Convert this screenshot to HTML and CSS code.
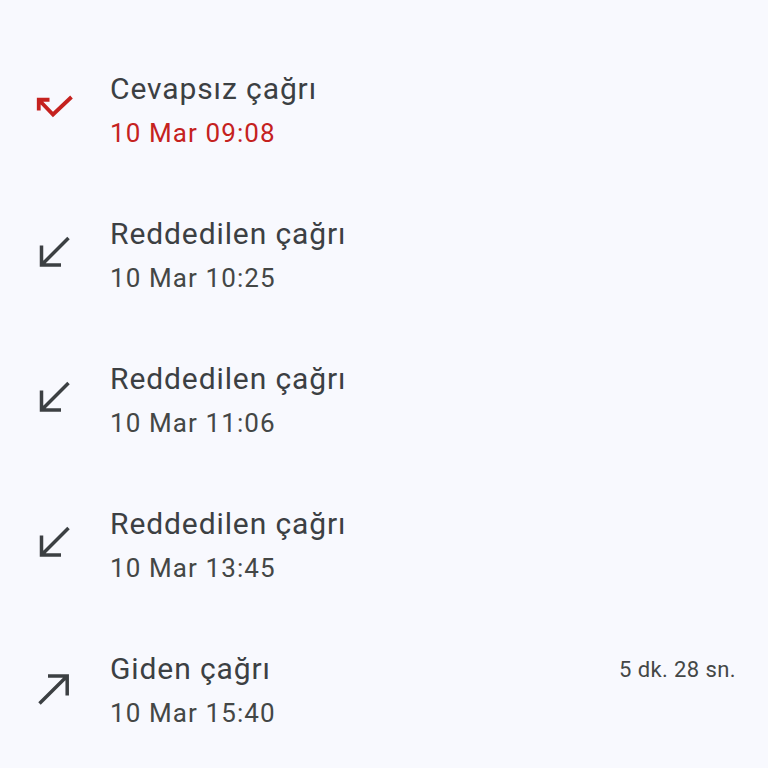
FILE: index.html
```html
<!DOCTYPE html>
<html>
  <head>
    <title>Arama geçmişi</title>
    <link rel="stylesheet" href="styles.css">
  </head>
  <body>
    <ul class="callList">
      <li class="callRow missed">
        <svg class="callIcon" viewBox="0 0 48 48"><path d="M8.75 23.5V12.75H19.5M8.75 12.75L23 27.5L41.5 10"/></svg>
        <div class="callText">
          <div class="callTitle">Cevapsız çağrı</div>
          <div class="callTime">10 Mar 09:08</div>
        </div>
      </li>
      <li class="callRow">
        <svg class="callIcon" viewBox="0 0 48 48"><path d="M11.5 13.5V33H31M11.5 33L38.5 6"/></svg>
        <div class="callText">
          <div class="callTitle">Reddedilen çağrı</div>
          <div class="callTime">10 Mar 10:25</div>
        </div>
      </li>
      <li class="callRow">
        <svg class="callIcon" viewBox="0 0 48 48"><path d="M11.5 13.5V33H31M11.5 33L38.5 6"/></svg>
        <div class="callText">
          <div class="callTitle">Reddedilen çağrı</div>
          <div class="callTime">10 Mar 11:06</div>
        </div>
      </li>
      <li class="callRow">
        <svg class="callIcon" viewBox="0 0 48 48"><path d="M11.5 13.5V33H31M11.5 33L38.5 6"/></svg>
        <div class="callText">
          <div class="callTitle">Reddedilen çağrı</div>
          <div class="callTime">10 Mar 13:45</div>
        </div>
      </li>
      <li class="callRow">
        <svg class="callIcon" viewBox="0 0 48 48"><path d="M18 9H37.2V28.5M37.2 9L9.5 36.5"/></svg>
        <div class="callText">
          <div class="callTitle">Giden çağrı</div>
          <div class="callTime">10 Mar 15:40</div>
        </div>
        <div class="callDuration">5 dk. 28 sn.</div>
      </li>
    </ul>
  </body>
</html>
```

FILE: styles.css
```css
body {
  margin: 0;
  background-color: #f8f9fe;
  font-family: Roboto, "Noto Sans", sans-serif;
  color: #3c4043;
}

.callList {
  list-style: none;
  margin: 0;
  padding: 38px 32px 0 30px;
}

.callRow {
  display: flex;
  align-items: center;
  height: 145px;
}

.callIcon {
  width: 48px;
  height: 48px;
  flex: none;
  fill: none;
  stroke: #3c4043;
  stroke-width: 3.5;
}

.callText {
  flex: 1;
  margin-left: 32px;
}

.callTitle {
  font-size: 30px;
  line-height: 44px;
  letter-spacing: 0.9px;
}

.callTime {
  font-size: 26px;
  line-height: 44px;
  letter-spacing: 1.1px;
  color: #444746;
}

.missed .callIcon {
  stroke: #c5221f;
  stroke-width: 3.8;
}

.missed .callTime {
  color: #c5221f;
}

.callDuration {
  align-self: flex-start;
  margin-top: 30px;
  font-size: 22px;
  line-height: 44px;
  letter-spacing: 0.4px;
  color: #444746;
}
```
